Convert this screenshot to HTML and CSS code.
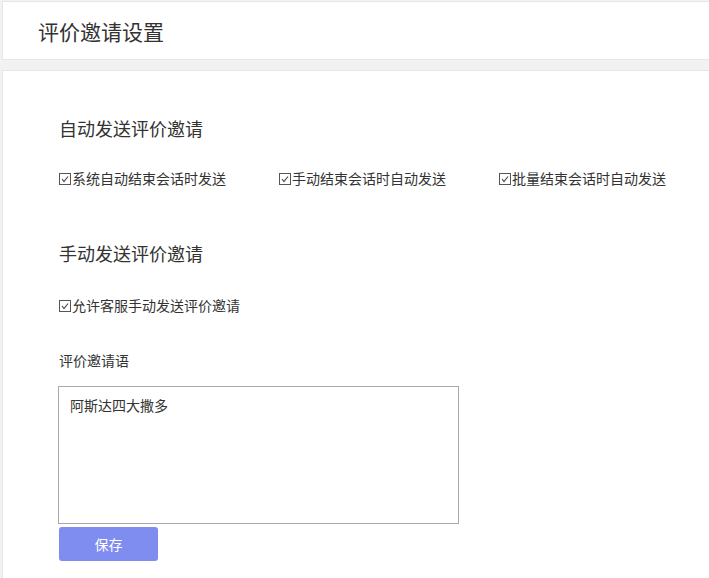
FILE: index.html
```html
<!DOCTYPE html>
<html lang="zh-CN">
<head>
    <meta charset="UTF-8">
    <meta name="viewport" content="width=device-width, initial-scale=1.0">
    <title>评价邀请设置</title>
    <link rel="stylesheet" href="styles.css">
</head>
<body>

<div class="page">
    <div class="card header">
        <h2>评价邀请设置</h2>
    </div>

    <div class="card content">
        <h3>自动发送评价邀请</h3>
        <div class="options">
            <span class="option"><span class="box"><svg viewBox="0 0 10 10"><polyline points="2,5 4,7.5 8,2.5"/></svg></span>系统自动结束会话时发送</span>
            <span class="option"><span class="box"><svg viewBox="0 0 10 10"><polyline points="2,5 4,7.5 8,2.5"/></svg></span>手动结束会话时自动发送</span>
            <span class="option"><span class="box"><svg viewBox="0 0 10 10"><polyline points="2,5 4,7.5 8,2.5"/></svg></span>批量结束会话时自动发送</span>
        </div>

        <h3 class="second">手动发送评价邀请</h3>
        <div class="options manual">
            <span class="option"><span class="box"><svg viewBox="0 0 10 10"><polyline points="2,5 4,7.5 8,2.5"/></svg></span>允许客服手动发送评价邀请</span>
        </div>

        <div class="label">评价邀请语</div>
        <textarea id="inviteText">阿斯达四大撒多</textarea>
        <div>
            <button type="button">保存</button>
        </div>
    </div>
</div>

</body>
</html>
```

FILE: styles.css
```css
html, body {
    margin: 0;
    overflow: hidden;
}
body {
    font-family: "Noto Sans CJK SC", "Noto Sans", sans-serif;
    background-color: #f2f2f2;
    color: #333;
}
.page {
    padding: 1px 0 0 2px;
}
.card {
    background-color: white;
    border: 1px solid #e6e6e6;
    margin-right: -10px;
}
.header {
    height: 57px;
    display: flex;
    align-items: center;
    padding-left: 35px;
}
.header h2 {
    margin: 0;
    font-size: 21px;
    font-weight: normal;
    line-height: 24px;
}
.content {
    margin-top: 10px;
    padding: 45px 0 40px 56px;
    height: 520px;
}
h3 {
    margin: 0;
    font-size: 18px;
    font-weight: normal;
    line-height: 24px;
}
h3.second {
    margin-top: 53px;
}
.options {
    display: grid;
    grid-template-columns: repeat(3, 220px);
    margin-top: 28px;
    font-size: 14px;
    line-height: 20px;
}
.options.manual {
    margin-top: 30px;
}
.option {
    white-space: nowrap;
    display: flex;
    align-items: center;
}
.box {
    display: inline-block;
    width: 10px;
    height: 10px;
    border: 1px solid #555;
    margin-right: 1px;
    margin-top: 1px;
}
.box svg {
    display: block;
    width: 10px;
    height: 10px;
    fill: none;
    stroke: #444;
    stroke-width: 1.1;
}
.label {
    margin-top: 35px;
    font-size: 14px;
    line-height: 20px;
}
textarea {
    display: block;
    margin: 16px 0 0 -1px;
    width: 401px;
    height: 138px;
    box-sizing: border-box;
    padding: 8px 10px 10px 11px;
    border: 1px solid #a9a9a9;
    font-family: inherit;
    font-size: 14px;
    line-height: 20px;
    color: #333;
    resize: none;
}
button {
    margin-top: 3px;
    width: 99px;
    height: 34px;
    background-color: #7f8cf0;
    color: white;
    border: none;
    border-radius: 3px;
    font-family: inherit;
    font-size: 14px;
    cursor: pointer;
}
```
